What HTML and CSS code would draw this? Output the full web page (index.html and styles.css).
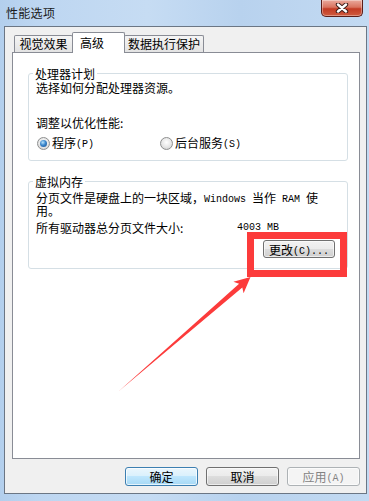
FILE: index.html
```html
<!DOCTYPE html>
<html lang="zh-CN">
<head>
    <meta charset="UTF-8">
    <title>性能选项</title>
    <link rel="stylesheet" href="styles.css">
</head>
<body>
    <div class="window">
        <div class="titlebar">
            <span class="title">性能选项</span>
            <button class="close-button">
                <svg width="14" height="10" viewBox="0 0 14 10">
                    <path d="M3 1.5 L11 8.5 M11 1.5 L3 8.5" stroke="#3b1c18" stroke-width="4.4" stroke-linecap="round"/>
                    <path d="M3 1.5 L11 8.5 M11 1.5 L3 8.5" stroke="#ffffff" stroke-width="2.4" stroke-linecap="round"/>
                </svg>
            </button>
        </div>

        <div class="client">
            <div class="tabs">
                <div class="tab tab-visual">视觉效果</div>
                <div class="tab tab-active">高级</div>
                <div class="tab tab-dep">数据执行保护</div>
            </div>

            <div class="panel">
                <fieldset class="group">
                    <legend>处理器计划</legend>
                    <p class="line">选择如何分配处理器资源。</p>
                    <p class="line line-gap">调整以优化性能:</p>
                    <div class="radios">
                        <label class="radio-item"><span class="radio checked"></span><span class="radio-label">程序<span class="mono">(P)</span></span></label>
                        <label class="radio-item"><span class="radio"></span><span class="radio-label">后台服务<span class="mono">(S)</span></span></label>
                    </div>
                </fieldset>

                <fieldset class="group group-memory">
                    <legend>虚拟内存</legend>
                    <p class="text">分页文件是硬盘上的一块区域，<span class="mono">Windows </span>当作<span class="mono"> RAM </span>使<br>用。</p>
                    <p class="size-row"><span class="size-label">所有驱动器总分页文件大小:</span><span class="mono size-value">4003 MB</span></p>
                    <button class="btn btn-change">更改<span class="mono">(C)...</span></button>
                </fieldset>
            </div>

            <div class="buttons">
                <button class="btn btn-default">确定</button>
                <button class="btn">取消</button>
                <button class="btn btn-disabled">应用<span class="mono">(A)</span></button>
            </div>
        </div>

        <div class="annot-box"></div>
        <svg class="annot-arrow" width="369" height="501" viewBox="0 0 369 501">
            <polygon points="119,391 242.3,287.5 243.6,293.3 250.5,277 233.4,281.7 239.1,283.7" fill="#fc3b3b"/>
        </svg>
    </div>
</body>
</html>
```

FILE: styles.css
```css
body {
    margin: 0;
    width: 369px;
    height: 501px;
    overflow: hidden;
    background-color: #b9d4f0;
    font-family: "Noto Sans CJK SC", sans-serif;
    font-size: 12px;
    color: #000;
}

.window {
    position: relative;
    width: 369px;
    height: 501px;
    display: flex;
    flex-direction: column;
    background: linear-gradient(90deg, #b3cfed 0%, #bdd6f1 10%, #c6dcf3 40%, #b8d2ee 65%, #c3daf2 100%);
}

.titlebar {
    height: 26px;
    display: flex;
    align-items: flex-start;
}

.title {
    margin: 5px 0 0 6px;
    font-size: 12px;
    line-height: 15px;
    letter-spacing: 0.3px;
    color: #1a1a1a;
}

.close-button {
    margin-left: auto;
    margin-right: 6px;
    width: 42px;
    height: 17px;
    padding: 0;
    border: 1px solid #5b1d18;
    border-top: none;
    border-radius: 0 0 5px 5px;
    background: linear-gradient(#eaa99d 0%, #d9735f 45%, #c33b24 55%, #cf5b3f 100%);
    box-shadow: inset 0 0 0 1px rgba(255, 255, 255, 0.35);
    display: flex;
    align-items: center;
    justify-content: center;
}

.client {
    box-sizing: border-box;
    width: 363px;
    height: 468px;
    margin-left: 4px;
    background-color: #f0f0f0;
    border: 1px solid #6b7684;
    display: flex;
    flex-direction: column;
}

.tabs {
    display: flex;
    align-items: flex-end;
    height: 21px;
    margin: 5px 0 0 9px;
}

.tab {
    box-sizing: border-box;
    height: 17px;
    margin-bottom: 1px;
    border: 1px solid #898c95;
    border-bottom: none;
    border-radius: 2px 2px 0 0;
    background: linear-gradient(#f5f5f5, #e3e3e3);
    line-height: 16px;
    text-align: center;
    white-space: nowrap;
}

.tab-visual {
    width: 59px;
}

.tab-active {
    position: relative;
    z-index: 1;
    width: 53px;
    height: 21px;
    margin-bottom: 0;
    margin-left: -1px;
    padding: 1px 0 0 7px;
    line-height: 18px;
    text-align: left;
    background: #fff;
}

.tab-dep {
    width: 80px;
    margin-left: -1px;
}

.panel {
    box-sizing: border-box;
    width: 348px;
    height: 407px;
    margin: -1px 0 0 7px;
    background-color: #fff;
    border: 1px solid #898c95;
    display: flex;
    flex-direction: column;
}

.group {
    box-sizing: border-box;
    width: 320px;
    min-width: 0;
    margin: 14px 0 0 15px;
    padding: 0 12px 10px 7px;
    border: 1px solid #d5dfe5;
    border-radius: 3px;
    display: flex;
    flex-direction: column;
}

.group legend {
    padding: 0 2px;
    margin-left: -3px;
    line-height: 13px;
}

.line {
    margin: 1px 0 0;
    line-height: 14px;
}

.line-gap {
    margin-top: 21px;
}

.radios {
    display: flex;
    margin-top: 6px;
}

.radio-item {
    display: flex;
    align-items: center;
    width: 123px;
    height: 14px;
}

.radio-label {
    line-height: 14px;
}

.radio {
    box-sizing: border-box;
    width: 13px;
    height: 13px;
    margin: 0 2px 0 1px;
    border: 1px solid #8e8f8f;
    border-radius: 50%;
    background: radial-gradient(circle at 50% 40%, #ffffff 0%, #e6e6e6 55%, #c9c9c9 100%);
    display: flex;
    align-items: center;
    justify-content: center;
}

.radio.checked::after {
    content: "";
    width: 7px;
    height: 7px;
    border-radius: 50%;
    background: radial-gradient(circle at 40% 35%, #b8e3fc 0%, #3a86cc 45%, #1c4f8d 100%);
}

.mono {
    font-family: "Liberation Mono", monospace;
    font-size: 10px;
    line-height: 0;
    vertical-align: 1px;
}

.group-memory {
    padding-bottom: 10px;
}

.text {
    margin: 3px 0 0;
    line-height: 13px;
}

.size-row {
    margin: 4px 0 0;
    line-height: 13px;
    white-space: nowrap;
}

.size-label {
    display: inline-block;
    width: 201px;
}

.size-value {
    vertical-align: 3px;
}

.btn {
    box-sizing: border-box;
    width: 73px;
    height: 19px;
    padding: 0;
    border: 1px solid #707070;
    border-radius: 3px;
    background: linear-gradient(#f2f2f2 0%, #ebebeb 50%, #dddddd 50%, #cfcfcf 100%);
    box-shadow: inset 0 0 0 1px rgba(255, 255, 255, 0.6);
    font-family: "Noto Sans CJK SC", sans-serif;
    font-size: 12px;
    line-height: 16px;
    color: #000;
}

.btn-change {
    align-self: flex-end;
    width: 72px;
    height: 18px;
    margin-top: 6px;
    line-height: 15px;
}

.buttons {
    display: flex;
    justify-content: flex-end;
    gap: 8px;
    margin: 8px 6px 0 0;
}

.btn-default {
    border-color: #3c7fb1;
    background: linear-gradient(#eaf6fd 0%, #d9f0fc 50%, #bee6fd 50%, #a7d9f5 100%);
    box-shadow: inset 0 0 0 1px rgba(255, 255, 255, 0.7);
}

.btn-disabled {
    border-color: #adb2b5;
    background: #f4f4f4;
    color: #838383;
}

.annot-box {
    position: absolute;
    left: 247px;
    top: 232px;
    width: 100px;
    height: 45px;
    box-sizing: border-box;
    border: 7px solid #fc3b3b;
}

.annot-arrow {
    position: absolute;
    left: 0;
    top: 0;
    pointer-events: none;
}
```
